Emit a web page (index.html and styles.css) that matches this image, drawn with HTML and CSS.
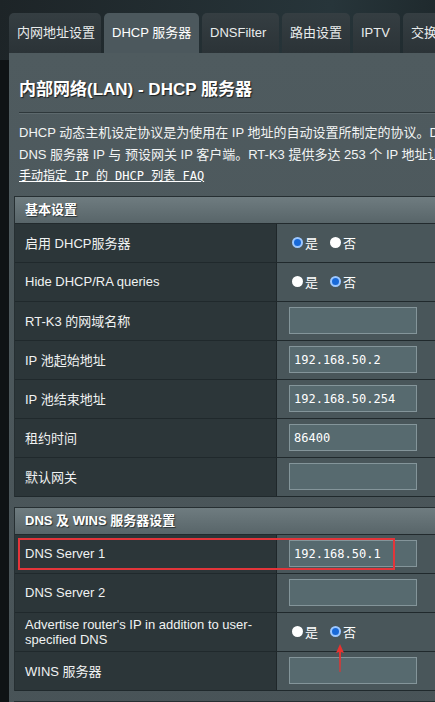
FILE: index.html
```html
<!DOCTYPE html>
<html lang="zh-CN">
<head>
    <meta charset="UTF-8">
    <meta name="viewport" content="width=device-width, initial-scale=1.0">
    <title>内部网络(LAN) - DHCP 服务器</title>
    <link rel="stylesheet" href="styles.css">
</head>
<body>
    <div class="page">
        <ul class="tabs">
            <li class="tab">内网地址设置</li>
            <li class="tab active">DHCP 服务器</li>
            <li class="tab">DNSFilter</li>
            <li class="tab">路由设置</li>
            <li class="tab">IPTV</li>
            <li class="tab">交换机控制</li>
        </ul>
        <div class="panel">
            <h1 class="title">内部网络(LAN) - DHCP 服务器</h1>
            <div class="divider"></div>
            <p class="desc">
                <span class="line">DHCP 动态主机设定协议是为使用在 IP 地址的自动设置所制定的协议。DHCP 服务器可以为客户端分配 IP 地址，并通知客户端</span>
                <span class="line">DNS 服务器 IP 与 预设网关 IP 客户端。RT-K3 提供多达 253 个 IP 地址让您的局域网使用。</span>
                <a class="faq" href="#">手动指定 IP 的 DHCP 列表 FAQ</a>
            </p>

            <div class="group">
                <div class="group-head">基本设置</div>
                <div class="row">
                    <div class="label">启用 DHCP服务器</div>
                    <div class="field">
                        <span class="radio on"></span><span class="opt">是</span>
                        <span class="radio"></span><span class="opt">否</span>
                    </div>
                </div>
                <div class="row">
                    <div class="label">Hide DHCP/RA queries</div>
                    <div class="field">
                        <span class="radio"></span><span class="opt">是</span>
                        <span class="radio on"></span><span class="opt">否</span>
                    </div>
                </div>
                <div class="row">
                    <div class="label">RT-K3 的网域名称</div>
                    <div class="field"><input class="text" type="text" value=""></div>
                </div>
                <div class="row">
                    <div class="label">IP 池起始地址</div>
                    <div class="field"><input class="text" type="text" value="192.168.50.2"></div>
                </div>
                <div class="row">
                    <div class="label">IP 池结束地址</div>
                    <div class="field"><input class="text" type="text" value="192.168.50.254"></div>
                </div>
                <div class="row">
                    <div class="label">租约时间</div>
                    <div class="field"><input class="text" type="text" value="86400"></div>
                </div>
                <div class="row">
                    <div class="label">默认网关</div>
                    <div class="field"><input class="text" type="text" value=""></div>
                </div>
            </div>

            <div class="group">
                <div class="group-head">DNS 及 WINS 服务器设置</div>
                <div class="row">
                    <div class="label">DNS Server 1</div>
                    <div class="field"><input class="text" type="text" value="192.168.50.1"></div>
                    <div class="highlight"></div>
                </div>
                <div class="row">
                    <div class="label">DNS Server 2</div>
                    <div class="field"><input class="text" type="text" value=""></div>
                </div>
                <div class="row">
                    <div class="label wrap">Advertise router's IP in addition to user-specified DNS</div>
                    <div class="field">
                        <span class="radio"></span><span class="opt">是</span>
                        <span class="radio on"></span><span class="opt">否</span>
                    </div>
                </div>
                <div class="row">
                    <div class="label">WINS 服务器</div>
                    <div class="field"><input class="text" type="text" value=""></div>
                </div>
                <svg class="arrow" width="14" height="30" viewBox="0 0 14 30">
                    <path d="M7 1 L3 10 L6 9 L6.5 29 L7.5 29 L8 9 L11 10 Z" fill="#e8322f"/>
                </svg>
            </div>

            <div class="group">
                <div class="group-head">手动指定 IP 的 DHCP 列表</div>
            </div>
        </div>
    </div>
</body>
</html>
```

FILE: styles.css
```css
body {
    margin: 0;
    width: 435px;
    height: 702px;
    overflow: hidden;
    background: #0f1315;
    font-family: "Liberation Sans", Arial, "Noto Sans CJK SC", sans-serif;
    font-size: 13px;
    color: #fff;
}
.page {
    width: 820px;
    background: linear-gradient(100deg, #1d2427 0%, #27353a 40%, #141a1c 70%);
    background-size: 100% 60px;
    background-repeat: no-repeat;
    background-color: #0f1315;
}
.tabs {
    list-style: none;
    margin: 0;
    padding: 13px 0 0 9px;
    display: flex;
    gap: 3px;
}
.tab {
    height: 40px;
    line-height: 40px;
    padding: 0 8px;
    background: linear-gradient(#353e42, #2b3337);
    border-radius: 5px 5px 0 0;
    color: #e9ecec;
    white-space: nowrap;
}
.tab:nth-child(1) { width: 76px; }
.tab:nth-child(2) { width: 79px; }
.tab:nth-child(3) { width: 61px; }
.tab:nth-child(4) { width: 52px; }
.tab:nth-child(5) { width: 31px; }
.tab.active {
    background: #4c585d;
    color: #fff;
}
.panel {
    margin-left: 9px;
    background: linear-gradient(#4f5b5f, #4a5559 500px, #485357);
    padding: 1px 0 4px 5px;
    height: 700px;
}
.title {
    margin: 24px 0 0 5px;
    font-size: 17px;
    font-weight: bold;
    line-height: 24px;
    color: #fff;
    text-shadow: 1px 1px 1px #1a1f21;
}
.divider {
    margin: 10px 0 0 5px;
    height: 1px;
    background: #2e383b;
    border-bottom: 1px solid #5d696d;
}
.desc {
    margin: 8px 0 0 5px;
    line-height: 21.5px;
    color: #f2f4f4;
}
.desc .line {
    display: block;
    white-space: nowrap;
}
.faq {
    font-family: "DejaVu Sans Mono", "Noto Sans CJK SC", monospace;
    font-size: 12px;
    color: #fff;
    text-decoration: underline;
}
.group {
    margin-top: 10px;
    width: 720px;
    border: 1px solid #262f32;
    border-bottom: none;
    position: relative;
}
.desc + .group {
    margin-top: 8px;
}
.group-head {
    height: 26px;
    line-height: 26px;
    padding-left: 10px;
    font-weight: bold;
    color: #fff;
    background: linear-gradient(#6f7c80, #586569);
    border-bottom: 1px solid #222a2d;
    text-shadow: 1px 1px 1px #2a3336;
}
.row {
    display: grid;
    grid-template-columns: 262px 1fr;
    height: 38px;
    border-bottom: 1px solid #20292c;
    position: relative;
}
.label {
    background: #2c3639;
    padding-left: 10px;
    display: flex;
    align-items: center;
    color: #f0f2f2;
    border-right: 1px solid #1f272a;
}
.label.wrap {
    padding-right: 6px;
    line-height: 15px;
}
.field {
    background: #49565a;
    padding-left: 12px;
    display: flex;
    align-items: center;
}
.text {
    width: 128px;
    height: 27px;
    box-sizing: border-box;
    background: #576a6f;
    border: 1px solid #84959a;
    color: #fff;
    font-family: "DejaVu Sans Mono", monospace;
    font-size: 12px;
    padding: 0 4px;
    outline: none;
}
.radio {
    width: 11px;
    height: 11px;
    border-radius: 50%;
    background: #fff;
    box-sizing: border-box;
    margin: 0 2px 0 3px;
}
.radio.on {
    background: #1869d8;
    border: 2px solid #9cc7ff;
}
.opt {
    margin-right: 9px;
    color: #fff;
}
.highlight {
    position: absolute;
    left: 3px;
    top: 3px;
    width: 377px;
    height: 32px;
    box-sizing: border-box;
    border: 2px solid #e3353a;
}
.arrow {
    position: absolute;
    left: 318px;
    top: 135px;
}
```
